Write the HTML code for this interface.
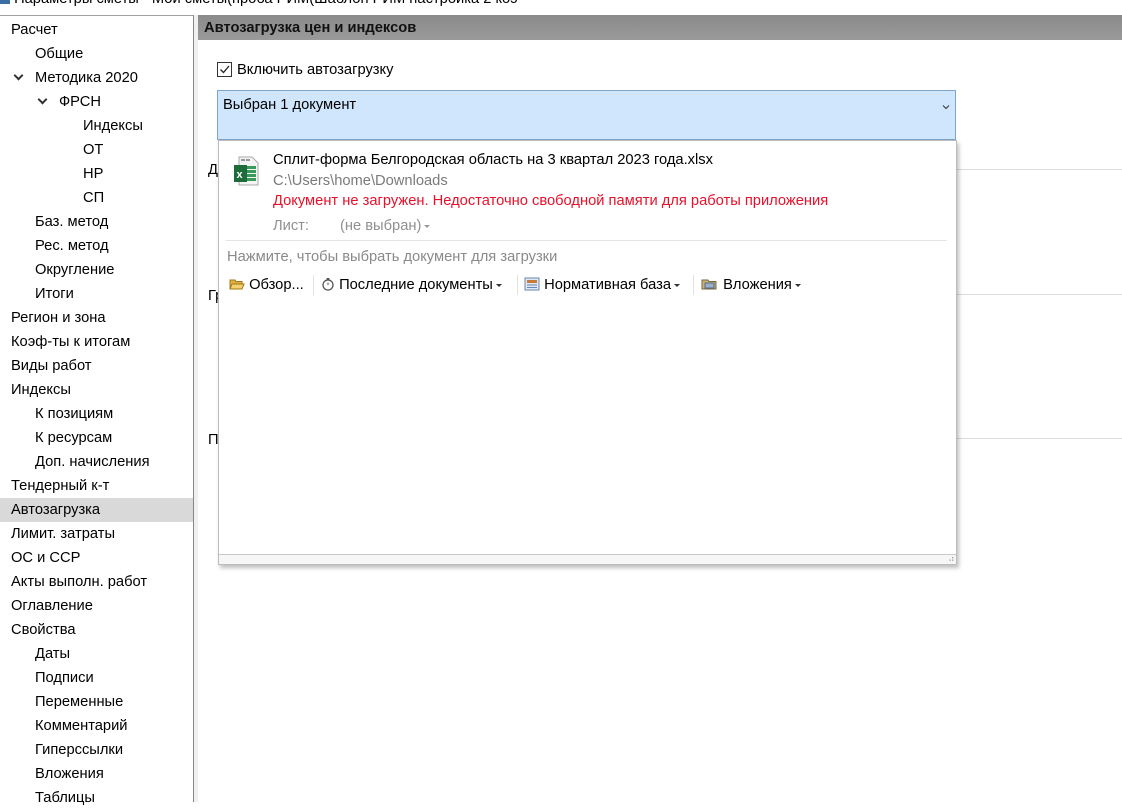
<!DOCTYPE html>
<html><head><meta charset="utf-8"><style>
*{box-sizing:border-box}
body{margin:0;width:1122px;height:802px;overflow:hidden;background:#fff;font-family:"Liberation Sans","DejaVu Sans",sans-serif;font-size:14.7px;color:#000;position:relative}
.abs{position:absolute;white-space:nowrap}
#title{left:0;top:0;width:1122px;height:15px;background:#fff;overflow:hidden}
#left{left:0;top:15px;width:194px;height:787px;border-top:1px solid #a0a0a0;border-right:1px solid #828790;background:#fff}
#strip{left:194px;top:15px;width:4px;height:787px;background:#f0f0f0}
.t{position:absolute;height:24px;line-height:24px;font-size:14.7px}
.chev{position:absolute;width:7px;height:7px;border-right:2px solid #333;border-bottom:2px solid #333;transform:rotate(45deg)}
#hdr{left:198px;top:15px;width:924px;height:25px;background:linear-gradient(#8a8a8a,#9a9a9a);font-weight:bold;font-size:14.7px;line-height:26px;padding-left:6px;color:#111}
.line{position:absolute;height:1px;background:#d8dde2}
#sel{left:217px;top:90px;width:739px;height:50px;background:#d0e6fc;border:1px solid #7ea4cc;padding:6px 0 0 5px}
#pop{left:218px;top:140px;width:739px;height:425px;background:#fff;border:1px solid #bcbcbc;box-shadow:2px 3px 4px rgba(0,0,0,.25)}
#foot{position:absolute;left:0;bottom:0;width:737px;height:10px;background:#f6f6f6;border-top:1px solid #c8c8c8}
.tb{position:absolute;top:134px;font-size:14.7px;line-height:20px}
.sep{position:absolute;top:134px;width:1px;height:20px;background:#e2e2e2}
.dd{display:inline-block;width:0;height:0;border-left:3px solid transparent;border-right:3px solid transparent;border-top:3px solid #333;vertical-align:middle;margin-left:3px}
</style></head><body>
<div class="abs" id="title"><div style="position:absolute;left:0;top:-9px;font-size:14.7px;color:#000;white-space:nowrap"><span style="display:inline-block;width:10px;height:10px;background:#3a6ea5;vertical-align:middle"></span> Параметры сметы - Мои сметы(проба РИМ(Шаблон РИМ настройка 2 коэ</div></div>
<div class="abs" id="left">
<div style="position:absolute;left:0;top:482px;width:193px;height:24px;background:#d9d9d9"></div>
<div class="t" style="left:11px;top:2px">Расчет</div>
<div class="t" style="left:35px;top:26px">Общие</div>
<div class="chev" style="left:15px;top:56px"></div><div class="t" style="left:35px;top:50px">Методика 2020</div>
<div class="chev" style="left:39px;top:80px"></div><div class="t" style="left:59px;top:74px">ФРСН</div>
<div class="t" style="left:83px;top:98px">Индексы</div>
<div class="t" style="left:83px;top:122px">ОТ</div>
<div class="t" style="left:83px;top:146px">НР</div>
<div class="t" style="left:83px;top:170px">СП</div>
<div class="t" style="left:35px;top:194px">Баз. метод</div>
<div class="t" style="left:35px;top:218px">Рес. метод</div>
<div class="t" style="left:35px;top:242px">Округление</div>
<div class="t" style="left:35px;top:266px">Итоги</div>
<div class="t" style="left:11px;top:290px">Регион и зона</div>
<div class="t" style="left:11px;top:314px">Коэф-ты к итогам</div>
<div class="t" style="left:11px;top:338px">Виды работ</div>
<div class="t" style="left:11px;top:362px">Индексы</div>
<div class="t" style="left:35px;top:386px">К позициям</div>
<div class="t" style="left:35px;top:410px">К ресурсам</div>
<div class="t" style="left:35px;top:434px">Доп. начисления</div>
<div class="t" style="left:11px;top:458px">Тендерный к-т</div>
<div class="t" style="left:11px;top:482px">Автозагрузка</div>
<div class="t" style="left:11px;top:506px">Лимит. затраты</div>
<div class="t" style="left:11px;top:530px">ОС и ССР</div>
<div class="t" style="left:11px;top:554px">Акты выполн. работ</div>
<div class="t" style="left:11px;top:578px">Оглавление</div>
<div class="t" style="left:11px;top:602px">Свойства</div>
<div class="t" style="left:35px;top:626px">Даты</div>
<div class="t" style="left:35px;top:650px">Подписи</div>
<div class="t" style="left:35px;top:674px">Переменные</div>
<div class="t" style="left:35px;top:698px">Комментарий</div>
<div class="t" style="left:35px;top:722px">Гиперссылки</div>
<div class="t" style="left:35px;top:746px">Вложения</div>
<div class="t" style="left:35px;top:770px">Таблицы</div>
</div>
<div class="abs" id="strip"></div>
<div class="abs" id="hdr">Автозагрузка цен и индексов</div>
<div class="abs" style="left:217px;top:62px;width:15px;height:15px;border:1px solid #333;background:#fff"><svg width="13" height="13" style="position:absolute;left:0;top:0"><path d="M2.5 6.5 L5.5 9.5 L11 3" fill="none" stroke="#222" stroke-width="1.3"/></svg></div>
<div class="abs" style="left:237px;top:61px;line-height:18px">Включить автозагрузку</div>
<div class="abs" style="left:208px;top:162px">Д</div>
<div class="abs" style="left:208px;top:288px">Гр</div>
<div class="abs" style="left:208px;top:432px">П</div>
<div class="line" style="left:957px;top:169px;width:165px"></div>
<div class="line" style="left:957px;top:294px;width:165px"></div>
<div class="line" style="left:957px;top:438px;width:165px"></div>
<div class="abs" id="sel">Выбран 1 документ<svg width="8" height="6" style="position:absolute;left:724px;top:13px"><path d="M1 1.5 L4 4.5 L7 1.5" fill="none" stroke="#333" stroke-width="1"/></svg></div>
<div class="abs" id="pop">
<svg width="26" height="30" style="position:absolute;left:14px;top:15px"><path d="M6 1 H19 L25 7 V29 H6 Z" fill="#f4f4f4" stroke="#aaa"/><rect x="8" y="3" width="4" height="2" fill="#999"/><rect x="13" y="3" width="4" height="2" fill="#999"/><g fill="#3a9a5c"><rect x="14" y="10" width="9" height="3"/><rect x="14" y="14" width="9" height="3"/><rect x="14" y="18" width="9" height="3"/><rect x="14" y="22" width="9" height="3"/></g><rect x="1" y="9" width="13" height="17" fill="#1e6b3c"/><text x="3.5" y="22" font-family="Liberation Sans" font-weight="bold" font-size="11" fill="#fff">x</text></svg>
<div class="abs" style="left:54px;top:11px">Сплит-форма Белгородская область на 3 квартал 2023 года.xlsx</div>
<div class="abs" style="left:54px;top:32px;color:#7a7a7a">C:\Users\home\Downloads</div>
<div class="abs" style="left:54px;top:52px;color:#e8102a">Документ не загружен. Недостаточно свободной памяти для работы приложения</div>
<div class="abs" style="left:54px;top:77px;color:#909090">Лист:</div>
<div class="abs" style="left:121px;top:77px;color:#909090">(не выбран)<span class="dd" style="border-top-color:#999"></span></div>
<div class="abs" style="left:7px;top:99px;width:721px;height:1px;background:#e4e4e4"></div>
<div class="abs" style="left:8px;top:108px;color:#8a8a8a">Нажмите, чтобы выбрать документ для загрузки</div>
<div class="tb" style="left:10px"><svg width="16" height="14" style="vertical-align:-2px"><path d="M1 3 H6 L7 4.5 H13 V12 H1 Z" fill="#e0b040" stroke="#a07818"/><path d="M3 7 H15 L13 12 H1 Z" fill="#f5d070" stroke="#a07818"/></svg> Обзор...</div>
<div class="sep" style="left:94px"></div>
<div class="tb" style="left:102px"><svg width="14" height="14" style="vertical-align:-2px"><circle cx="7" cy="8" r="5" fill="#fff" stroke="#555" stroke-width="1.3"/><path d="M7 8 V5.5" stroke="#555"/><rect x="5.5" y="1" width="3" height="1.5" fill="#555"/></svg> Последние документы<span class="dd"></span></div>
<div class="sep" style="left:298px"></div>
<div class="tb" style="left:305px"><svg width="16" height="14" style="vertical-align:-2px"><rect x="1" y="1" width="14" height="12" fill="#dfe8f4" stroke="#6a88b0"/><rect x="3" y="3" width="10" height="3" fill="#c87a3a"/><path d="M3 8 H13 M3 10.5 H13" stroke="#6a88b0"/></svg> Нормативная база<span class="dd"></span></div>
<div class="sep" style="left:474px"></div>
<div class="tb" style="left:482px"><svg width="18" height="14" style="vertical-align:-2px"><path d="M1 3 H7 L8 4.5 H15 V12 H1 Z" fill="#c9b37a" stroke="#7a6a40"/><rect x="4" y="6" width="9" height="5" fill="#9ab0c8" stroke="#5a6a80"/></svg> Вложения<span class="dd"></span></div>
<div id="foot"><svg width="6" height="6" style="position:absolute;right:2px;bottom:1px"><rect x="4" y="0" width="1.3" height="1.3" fill="#999"/><rect x="4" y="2.5" width="1.3" height="1.3" fill="#999"/><rect x="1.5" y="2.5" width="1.3" height="1.3" fill="#999"/></svg></div>
</div>
</body></html>
